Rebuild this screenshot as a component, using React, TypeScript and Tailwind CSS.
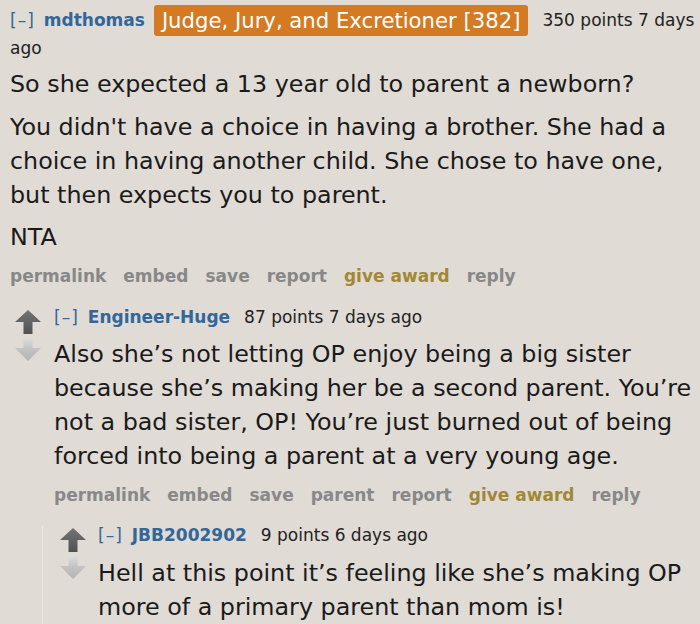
import React from "react";

const font = { fontFamily: '"DejaVu Sans", Verdana, sans-serif' };

function Arrows() {
  return (
    <div className="flex w-[26px] shrink-0 flex-col items-center gap-[4px] pt-[5px]">
      <svg width="26" height="24" viewBox="0 0 26 24">
        <defs>
          <linearGradient id="up" x1="0" y1="0" x2="0" y2="1">
            <stop offset="0" stopColor="#747474" />
            <stop offset="1" stopColor="#505050" />
          </linearGradient>
        </defs>
        <path d="M13 0 L26 12 L17.5 12 L17.5 24 L8.5 24 L8.5 12 L0 12 Z" fill="url(#up)" />
      </svg>
      <svg width="26" height="23" viewBox="0 0 26 23">
        <defs>
          <linearGradient id="down" x1="0" y1="0" x2="0" y2="1">
            <stop offset="0" stopColor="#dcdcdc" />
            <stop offset="0.45" stopColor="#c4c4c4" />
            <stop offset="1" stopColor="#b4b4b4" />
          </linearGradient>
        </defs>
        <path d="M8.5 0 L17.5 0 L17.5 10 L26 10 L13 23 L0 10 L8.5 10 Z" fill="url(#down)" />
      </svg>
    </div>
  );
}

function Tagline({ user, meta }: { user: string; meta: string }) {
  return (
    <div className="text-[17px] leading-[24px] text-[#222]">
      <span className="mr-[9px] tracking-[1px] text-[#369]">[–]</span>
      <span className="mr-[14px] font-bold text-[#369]">{user}</span>
      <span>{meta}</span>
    </div>
  );
}

function Actions({ items }: { items: string[] }) {
  return (
    <div className="flex gap-[17px] text-[17px] font-bold leading-[20px] text-[#888]">
      {items.map(i => (
        <span key={i} className={i === "give award" ? "text-[#a08834]" : ""}>
          {i}
        </span>
      ))}
    </div>
  );
}

export default function App() {
  return (
    <div className="h-[624px] w-[700px] overflow-hidden bg-[#e0dbd5] text-[#1a1a1a]" style={font}>
      <div className="pl-[10px] pr-[8px] pt-[5px]">
        <div className="-mr-[6px] text-[17px] leading-[24px] text-[#222]">
          <span className="mr-[9px] tracking-[1px] text-[#369]">[–]</span>
          <span className="mr-[9px] font-bold text-[#369]">mdthomas</span>
          <span className="mr-[14px] inline-block rounded-[3px] bg-[#d37a22] px-[8px] align-middle text-[21.2px] leading-[31px] text-white">
            Judge, Jury, and Excretioner [382]
          </span>
          <span className="whitespace-nowrap">350 points 7 days</span>
          <br />
          <span>ago</span>
        </div>

        <div className="mt-[7px] text-[23.8px] leading-[34px]">
          <p className="mb-[8.5px]">So she expected a 13 year old to parent a newborn?</p>
          <p className="mb-[8.5px]">
            You didn't have a choice in having a brother. She had a choice in having another child. She chose to have
            one, but then expects you to parent.
          </p>
          <p>NTA</p>
        </div>

        <div className="mt-[12px]">
          <Actions items={["permalink", "embed", "save", "report", "give award", "reply"]} />
        </div>

        <div className="ml-[5px] mt-[19px]">
          <div className="flex gap-[13px]">
            <Arrows />
            <div className="min-w-0 flex-1">
              <Tagline user="Engineer-Huge" meta="87 points 7 days ago" />
              <div className="mt-[8px] text-[23.8px] leading-[34px]">
                Also she’s not letting OP enjoy being a big sister because she’s making her be a second parent. You’re
                not a bad sister, OP! You’re just burned out of being forced into being a parent at a very young age.
              </div>
              <div className="mt-[12px]">
                <Actions items={["permalink", "embed", "save", "parent", "report", "give award", "reply"]} />
              </div>
            </div>
          </div>

          <div className="ml-[27px] mt-[21px] border-l border-[#ece8e3] pl-[17px]">
            <div className="flex gap-[12px]">
              <div className="-mt-[3px]">
                <Arrows />
              </div>
              <div className="-mt-[3px] min-w-0 flex-1">
                <Tagline user="JBB2002902" meta="9 points 6 days ago" />
                <div className="mt-[9px] text-[23.8px] leading-[34px]">
                  Hell at this point it’s feeling like she’s making OP more of a primary parent than mom is!
                </div>
              </div>
            </div>
          </div>
        </div>
      </div>
    </div>
  );
}
